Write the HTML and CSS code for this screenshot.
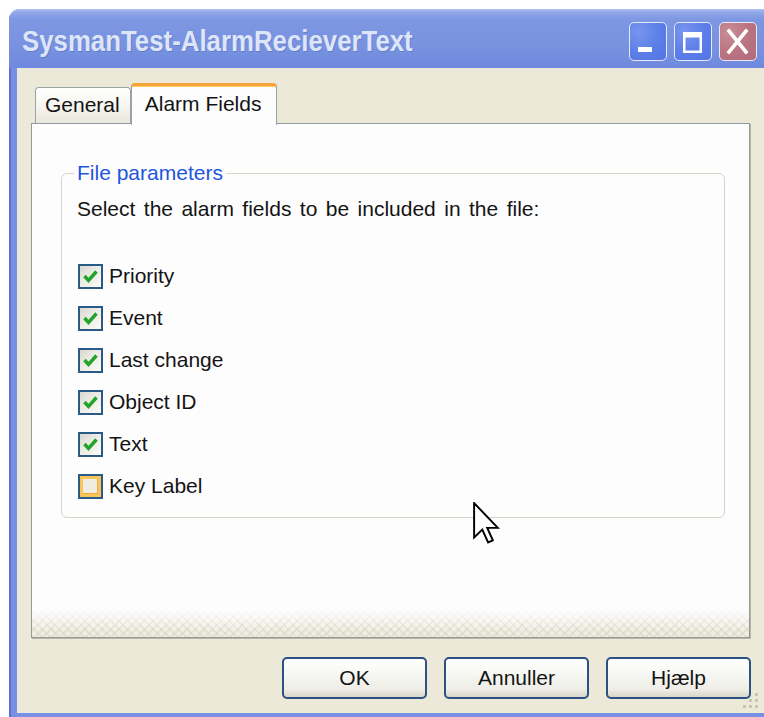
FILE: index.html
```html
<!DOCTYPE html>
<html lang="da">
<head>
<meta charset="utf-8">
<title>SysmanTest-AlarmRecieverText</title>
<link rel="stylesheet" href="styles.css">
</head>
<body>
<div class="window">
  <div class="titlebar">
    <span class="title">SysmanTest-AlarmRecieverText</span>
    <div class="caption-buttons">
      <span class="cap-btn">
        <svg width="38" height="39" viewBox="0 0 38 39"><rect x="9" y="25" width="14" height="5" fill="#fff"/></svg>
      </span>
      <span class="cap-btn">
        <svg width="38" height="39" viewBox="0 0 38 39"><path d="M9 10h19v21H9z M11.5 15.5v13h14v-13z" fill="#fff" fill-rule="evenodd"/></svg>
      </span>
      <span class="cap-btn close">
        <svg width="38" height="39" viewBox="0 0 38 39"><path d="M10 9 L27 30 M27 9 L10 30" stroke="#fff" stroke-width="3.6" stroke-linecap="square"/></svg>
      </span>
    </div>
  </div>

  <div class="client">
    <div class="tabs">
      <div class="tab">General</div>
      <div class="tab active">Alarm Fields</div>
    </div>

    <div class="panel">
      <div class="panel-body">
        <fieldset class="group">
          <legend>File parameters</legend>
          <p class="intro">Select the alarm fields to be included in the file:</p>
          <ul class="fields">
            <li><span class="check on"><svg width="21" height="21" viewBox="0 0 21 21"><path d="M4.5 10 L8.5 14.5 L16.5 5.5" fill="none" stroke="#22a32a" stroke-width="3.4"/></svg></span>Priority</li>
            <li><span class="check on"><svg width="21" height="21" viewBox="0 0 21 21"><path d="M4.5 10 L8.5 14.5 L16.5 5.5" fill="none" stroke="#22a32a" stroke-width="3.4"/></svg></span>Event</li>
            <li><span class="check on"><svg width="21" height="21" viewBox="0 0 21 21"><path d="M4.5 10 L8.5 14.5 L16.5 5.5" fill="none" stroke="#22a32a" stroke-width="3.4"/></svg></span>Last change</li>
            <li><span class="check on"><svg width="21" height="21" viewBox="0 0 21 21"><path d="M4.5 10 L8.5 14.5 L16.5 5.5" fill="none" stroke="#22a32a" stroke-width="3.4"/></svg></span>Object ID</li>
            <li><span class="check on"><svg width="21" height="21" viewBox="0 0 21 21"><path d="M4.5 10 L8.5 14.5 L16.5 5.5" fill="none" stroke="#22a32a" stroke-width="3.4"/></svg></span>Text</li>
            <li><span class="check hover"></span>Key Label</li>
          </ul>
        </fieldset>
      </div>
      <div class="panel-fade"></div>
    </div>

    <div class="actions">
      <button class="btn" type="button">OK</button>
      <button class="btn" type="button">Annuller</button>
      <button class="btn" type="button">Hjælp</button>
    </div>

    <svg class="grip" width="20" height="20" viewBox="0 0 20 20">
      <g fill="#c9c5b3">
        <rect x="14" y="2" width="3" height="3"/>
        <rect x="8" y="8" width="3" height="3"/><rect x="14" y="8" width="3" height="3"/>
        <rect x="2" y="14" width="3" height="3"/><rect x="8" y="14" width="3" height="3"/><rect x="14" y="14" width="3" height="3"/>
      </g>
    </svg>
  </div>
</div>

<svg class="cursor" width="27" height="42" viewBox="0 0 12.5 19.5">
  <path d="M0.5 0.5 V16.5 L4.3 12.8 L7 18.8 L9.2 17.8 L6.6 12 H11.5 Z" fill="#fff" stroke="#000" stroke-width="0.9" stroke-linejoin="miter"/>
</svg>
</body>
</html>
```

FILE: styles.css
```css
html, body {
  margin: 0;
  padding: 0;
}

body {
  position: relative;
  width: 764px;
  height: 717px;
  overflow: hidden;
  background: #ffffff;
  font-family: "Liberation Sans", Arial, sans-serif;
  font-size: 21px;
  color: #141414;
}

/* dialog frame */
.window {
  margin: 9px 0 0 9px;
  width: 763px;
  height: 712px;
  display: flex;
  flex-direction: column;
  border-radius: 11px 11px 0 0;
  background: linear-gradient(to right, #5a72d8 0, #5a72d8 2px, #7890e4 2px);
}

.titlebar {
  height: 59px;
  flex: none;
  display: flex;
  align-items: center;
  padding: 6px 15px 0 13px;
  box-sizing: border-box;
  border-radius: 11px 11px 0 0;
  background: linear-gradient(to bottom, #b2c2f2 0, #93a9ea 3px, #7e97e2 10px, #7892e0 38px, #6e89dd 59px);
}

.title {
  font-weight: bold;
  font-size: 29px;
  color: #dde5f8;
  white-space: nowrap;
  transform: scaleX(0.89);
  transform-origin: left center;
  text-shadow: 1px 1px 0 rgba(52, 72, 150, 0.3);
}

.caption-buttons {
  margin-left: auto;
  display: flex;
  gap: 7px;
}

.cap-btn {
  width: 38px;
  height: 39px;
  box-sizing: border-box;
  display: block;
  border: 1.5px solid #e4eafb;
  border-radius: 5px;
  background: radial-gradient(circle at 25% 25%, #7995ee 0, #5a7de8 55%, #5576e2 100%);
  overflow: hidden;
}

.cap-btn svg {
  display: block;
  margin: -1.5px;
}

.cap-btn.close {
  background: radial-gradient(circle at 25% 25%, #c98c98 0, #b9727f 55%, #b26b78 100%);
}

/* client area */
.client {
  position: relative;
  flex: 1;
  margin: 0 8px 8px 8px;
  padding: 15px 14px 14px 14px;
  background: #ece9d9;
  display: flex;
  flex-direction: column;
}

.tabs {
  display: flex;
  align-items: flex-start;
  padding-left: 4px;
  height: 40px;
  position: relative;
  z-index: 1;
}

.tab {
  margin-top: 4px;
  height: 36px;
  box-sizing: border-box;
  padding: 0 10px 0 9px;
  line-height: 33px;
  border: 1px solid #9aa3a4;
  border-bottom: none;
  border-radius: 4px 4px 0 0;
  background: linear-gradient(to bottom, #ffffff 0, #f6f5f0 50%, #e9e7dd 100%);
}

.tab.active {
  margin-top: 0;
  height: 42px;
  padding: 0 15px 0 13px;
  line-height: 36px;
  border-top: 3px solid #f4a63b;
  box-shadow: inset 0 1px 0 #ffc864;
  background: #fdfdfe;
}

.panel {
  height: 515px;
  box-sizing: border-box;
  border: 1px solid #919b9c;
  box-shadow: 1px 1px 0 #b9b6a6;
  background: #fdfdfe;
  display: flex;
  flex-direction: column;
}

.panel-body {
  padding: 37px 24px 0 29px;
}

.group {
  margin: 0;
  padding: 12px 14px 10px 15px;
  border: 1px solid #d6d3c4;
  border-radius: 6px;
}

.group legend {
  margin-left: -3px;
  padding: 0 3px;
  line-height: 24px;
  color: #1f55dc;
}

.intro {
  margin: 0;
  line-height: 24px;
  word-spacing: 2.6px;
}

.fields {
  list-style: none;
  margin: 34px 0 0 0;
  padding: 0;
}

.fields li {
  height: 42px;
  display: flex;
  align-items: center;
  padding-left: 1px;
}

.check {
  width: 25px;
  height: 25px;
  box-sizing: border-box;
  margin-right: 6px;
  border: 2px solid #2a5a88;
  background: linear-gradient(135deg, #d9d8cf 0, #ecebe5 45%, #fbfbf8 100%);
  flex: none;
}

.check svg {
  display: block;
}

.check.hover {
  background: #efede2;
  box-shadow: inset 0 0 0 3px #f8c45c, inset -4px -4px 0 0 #f3a93a;
}

/* dithered fade along the bottom of the tab page */
.panel-fade {
  margin-top: auto;
  height: 28px;
  background-image:
    linear-gradient(to bottom, rgba(253, 253, 254, 1) 0, rgba(253, 253, 254, 0) 75%),
    repeating-linear-gradient(45deg, rgba(214, 210, 190, 0.45) 0 2px, transparent 2px 6px),
    repeating-linear-gradient(-45deg, rgba(214, 210, 190, 0.45) 0 2px, transparent 2px 6px),
    linear-gradient(to bottom, #f8f7f2, #eeece1);
}

.actions {
  display: flex;
  justify-content: flex-end;
  gap: 17px;
  margin: 19px -1px 0 0;
}

.btn {
  width: 145px;
  height: 42px;
  padding: 0;
  font-family: inherit;
  font-size: 21px;
  color: #141414;
  border: 2px solid #2b5283;
  border-radius: 5px;
  background: linear-gradient(to bottom, #ffffff 0, #f7f7f3 40%, #eeede6 80%, #d9d5c8 100%);
}

.grip {
  position: absolute;
  right: 3px;
  bottom: 2px;
}

.cursor {
  position: absolute;
  left: 473px;
  top: 502px;
}
```
